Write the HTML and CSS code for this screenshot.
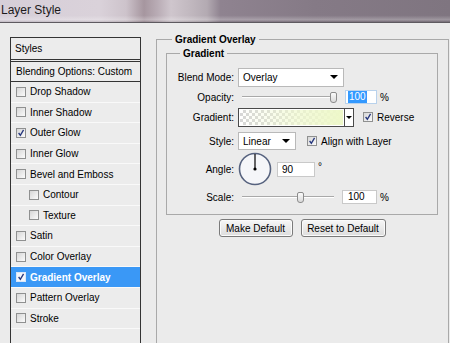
FILE: index.html
```html
<!DOCTYPE html>
<html lang="en">

<head>
    <meta charset="UTF-8">
    <meta name="viewport" content="width=device-width, initial-scale=1.0">
    <title>Layer Style</title>
    <link rel="stylesheet" href="styles.css">
</head>

<body>
    <div class="titlebar">Layer Style</div>

    <div class="dialog">
        <!-- left: list of effects -->
        <div class="styles-panel">
            <div class="panel-head">Styles</div>
            <div class="panel-blend">Blending Options: Custom</div>
            <ul class="style-list">
                <li><span class="cb"></span>Drop Shadow</li>
                <li><span class="cb"></span>Inner Shadow</li>
                <li><span class="cb"><svg viewBox="0 0 10 10"><path d="M2 5 L4.2 7.8 L8.2 1.2" /></svg></span>Outer Glow</li>
                <li><span class="cb"></span>Inner Glow</li>
                <li><span class="cb"></span>Bevel and Emboss</li>
                <li class="sub"><span class="cb"></span>Contour</li>
                <li class="sub"><span class="cb"></span>Texture</li>
                <li><span class="cb"></span>Satin</li>
                <li><span class="cb"></span>Color Overlay</li>
                <li class="selected"><span class="cb"><svg viewBox="0 0 10 10"><path d="M2 5 L4.2 7.8 L8.2 1.2" /></svg></span>Gradient Overlay</li>
                <li><span class="cb"></span>Pattern Overlay</li>
                <li><span class="cb"></span>Stroke</li>
            </ul>
        </div>

        <!-- right: settings -->
        <fieldset class="group outer">
            <legend>Gradient Overlay</legend>
            <fieldset class="group inner">
                <legend>Gradient</legend>
                <div class="form">
                    <label>Blend Mode:</label>
                    <div class="row">
                        <div class="select blend"><span>Overlay</span><i class="arrow"></i></div>
                    </div>

                    <label>Opacity:</label>
                    <div class="row">
                        <div class="slider"><span class="thumb" style="margin-left:88px"></span></div>
                        <div class="num focus"><span class="sel">100</span></div>
                        <span class="unit">%</span>
                    </div>

                    <label>Gradient:</label>
                    <div class="row">
                        <div class="gradient"><span class="swatch"></span><span class="drop"><i class="arrow small"></i></span></div>
                        <span class="check-label reverse"><span class="cb"><svg viewBox="0 0 10 10"><path d="M2 5 L4.2 7.8 L8.2 1.2" /></svg></span>Reverse</span>
                    </div>

                    <label>Style:</label>
                    <div class="row">
                        <div class="select style"><span>Linear</span><i class="arrow"></i></div>
                        <span class="check-label align"><span class="cb"><svg viewBox="0 0 10 10"><path d="M2 5 L4.2 7.8 L8.2 1.2" /></svg></span>Align with Layer</span>
                    </div>

                    <label>Angle:</label>
                    <div class="row">
                        <svg class="dial" viewBox="0 0 34 34" width="34" height="34">
                            <circle cx="17" cy="17" r="15.5" fill="#f5f6f9" stroke="#56627e" stroke-width="1.6" />
                            <line x1="17" y1="17" x2="17" y2="2" stroke="#000" stroke-width="1.2" />
                            <circle cx="17" cy="17" r="1.6" fill="#000" />
                        </svg>
                        <div class="num angle">90</div>
                        <span class="deg">&deg;</span>
                    </div>

                    <label>Scale:</label>
                    <div class="row">
                        <div class="slider"><span class="thumb" style="margin-left:55px"></span></div>
                        <div class="num scale">100</div>
                        <span class="unit">%</span>
                    </div>
                </div>
            </fieldset>
            <div class="buttons">
                <button class="btn make">Make Default</button>
                <button class="btn reset">Reset to Default</button>
            </div>
        </fieldset>
    </div>
</body>

</html>
```

FILE: styles.css
```css
* {
    margin: 0;
    padding: 0;
    box-sizing: border-box;
}

html,
body {
    width: 450px;
    height: 343px;
    overflow: hidden;
}

body {
    background-color: #ebebeb;
    font: 10px "Liberation Sans", Arial, sans-serif;
    color: #000;
}

/* window title */
.titlebar {
    height: 23px;
    padding-left: 1px;
    line-height: 20px;
    font-size: 12px;
    color: #1c1a1c;
    border-bottom: 1px solid #5e5a60;
    background:
        linear-gradient(to bottom, rgba(255, 255, 255, 0) 70%, rgba(255, 255, 255, 0.25) 90%, rgba(0, 0, 0, 0.1) 100%),
        linear-gradient(to bottom, rgba(60, 40, 60, 0) 0%, rgba(60, 40, 60, 0) 100%),
        linear-gradient(to right, #d6ced8 0%, #dad2da 22%, #cdc3cb 28%, #a6969f 32%, #b9acb5 35%, #cfc6cd 38%, #c2b9c0 42%, #b3aab2 46%, #8f8390 49%, #857a86 70%, #7f7580 100%);
}

.dialog {
    display: flex;
    gap: 15px;
    padding-left: 10px;
}

/* left list */
.styles-panel {
    flex: none;
    width: 131px;
    height: 330px;
    margin-top: 14px;
    border: 1px solid #343434;
    background-color: #ececec;
}

.panel-head {
    height: 24px;
    line-height: 21px;
    padding-left: 4px;
    border-bottom: 3px double #343434;
}

.panel-blend {
    height: 20px;
    line-height: 19px;
    padding-left: 5px;
    border-bottom: 1px solid #343434;
}

.style-list {
    list-style: none;
}

.style-list li {
    display: flex;
    align-items: center;
    gap: 4px;
    height: 20.6px;
    padding-left: 5px;
    border-bottom: 1px solid #f9f9f9;
}

.style-list li.sub {
    padding-left: 18px;
}

.style-list li.selected {
    background-color: #3a98f6;
    color: #fff;
    font-weight: bold;
}

/* checkbox */
.cb {
    flex: none;
    display: inline-flex;
    width: 10px;
    height: 10px;
    border: 1px solid #8f9090;
    background: linear-gradient(135deg, #d6d6d6, #fbfbfb);
}

.cb svg {
    width: 8px;
    height: 8px;
}

.cb path {
    fill: none;
    stroke: #27387e;
    stroke-width: 1.7;
}

.selected .cb {
    background: #f4f6fb;
    border-color: #d8e6f8;
}

/* group boxes */
.group {
    min-width: 0;
    border: 1px solid #a9a9a9;
}

.group legend {
    line-height: 13px;
    font-weight: bold;
    padding: 0 3px;
}

.outer {
    flex: 1;
    height: 330px;
    margin: 10px 1px 0 0;
    padding: 1px 10px 0 9px;
}

.outer > legend {
    margin-left: 6px;
}

.inner {
    padding: 6px 0 4px 0;
}

.inner > legend {
    margin-left: 13px;
}

.form {
    display: grid;
    grid-template-columns: 67px 1fr;
    grid-template-rows: 22px 18px 22px 26px 30px 26px;
    column-gap: 4px;
}

.form label {
    justify-self: end;
    align-self: center;
}

.row {
    display: flex;
    align-items: center;
}

/* dropdowns */
.select {
    display: flex;
    align-items: center;
    justify-content: space-between;
    background-color: #fff;
    border: 1px solid #b9b9b9;
    padding: 0 5px 0 4px;
}

.select.blend {
    width: 106px;
    height: 19px;
}

.select.style {
    width: 58px;
    height: 18px;
}

.arrow {
    width: 0;
    height: 0;
    border-left: 4px solid transparent;
    border-right: 4px solid transparent;
    border-top: 4px solid #000;
}

.arrow.small {
    border-left-width: 3px;
    border-right-width: 3px;
    border-top-width: 3px;
}

/* sliders */
.slider {
    width: 100px;
    height: 14px;
    padding-left: 4px;
    display: flex;
    align-items: center;
    background: linear-gradient(to bottom, transparent 6px, #a9a9a9 6px, #a9a9a9 7px, #fff 7px, #fff 8px, transparent 8px) 4px 0 / 92px 100% no-repeat;
}

.thumb {
    width: 7px;
    height: 11px;
    border: 1px solid #8c8c8c;
    border-radius: 2px 2px 3px 3px;
    background: linear-gradient(#fbfbfb, #d9d9d9);
}

/* number fields */
.num {
    height: 14px;
    line-height: 12px;
    background-color: #fff;
    border: 1px solid #c9c9c9;
}

.num.focus {
    width: 32px;
    margin-left: 7px;
    padding-left: 2px;
    border-color: #b9d2ec;
}

.sel {
    display: inline-block;
    padding: 0 1px;
    background-color: #3399ff;
    color: #fff;
}

.num.scale {
    width: 35px;
    margin-left: 4px;
    padding-left: 5px;
}

.num.angle {
    width: 38px;
    height: 15px;
    margin-left: 5px;
    padding-left: 4px;
    line-height: 13px;
}

.unit {
    margin-left: 3px;
}

.deg {
    margin: -6px 0 0 3px;
}

/* gradient preview */
.gradient {
    display: flex;
    width: 116px;
    height: 19px;
    border: 1px solid #4a4a4a;
}

.swatch {
    flex: 1;
    border: 1px solid #fff;
    background:
        linear-gradient(to right, rgba(242, 250, 212, 0) 0%, rgba(240, 249, 206, 0.7) 55%, #eef8c9 100%),
        repeating-conic-gradient(#d6d6d6 0 25%, #fff 0 50%) 0 0 / 6px 6px;
}

.drop {
    width: 9px;
    display: flex;
    align-items: center;
    justify-content: center;
    border-left: 1px solid #4a4a4a;
    background-color: #fff;
}

.check-label {
    display: flex;
    align-items: center;
    gap: 4px;
}

.check-label.reverse {
    margin-left: 9px;
}

.check-label.align {
    margin-left: 11px;
}

.dial {
    margin-left: 0;
}

/* buttons */
.buttons {
    display: flex;
    justify-content: center;
    gap: 8px;
    margin-top: 4px;
}

.btn {
    height: 18px;
    font: inherit;
    color: #000;
    border: 1px solid #7a7a7a;
    border-radius: 3px;
    background: linear-gradient(#f7f7f7, #dddddd);
    box-shadow: inset 0 0 0 1px #fbfbfb;
}

.btn.make {
    width: 74px;
}

.btn.reset {
    width: 85px;
}
```
